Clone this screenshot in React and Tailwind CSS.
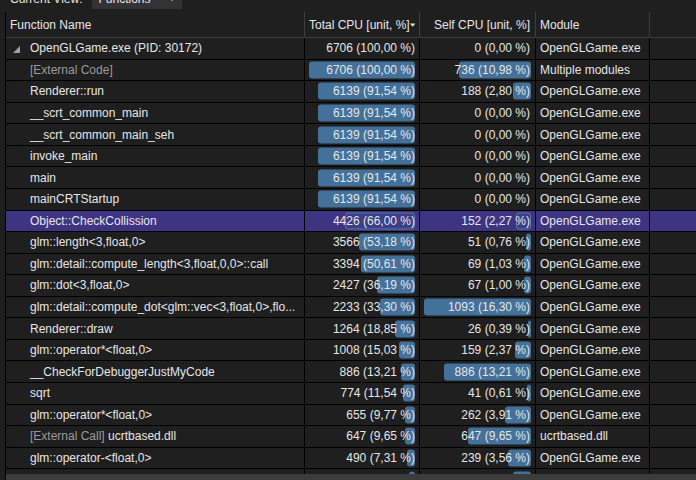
import React from "react";

const rows = [
  { name: "OpenGLGame.exe (PID: 30172)", root: true, total: 6706, totalPct: "100,00", tp: 100, self: 0, selfPct: "0,00", sp: 0, module: "OpenGLGame.exe" },
  { name: "[External Code]", ext: true, total: 6706, totalPct: "100,00", tp: 100, self: 736, selfPct: "10,98", sp: 10.98, module: "Multiple modules" },
  { name: "Renderer::run", total: 6139, totalPct: "91,54", tp: 91.54, self: 188, selfPct: "2,80", sp: 2.8, module: "OpenGLGame.exe" },
  { name: "__scrt_common_main", total: 6139, totalPct: "91,54", tp: 91.54, self: 0, selfPct: "0,00", sp: 0, module: "OpenGLGame.exe" },
  { name: "__scrt_common_main_seh", total: 6139, totalPct: "91,54", tp: 91.54, self: 0, selfPct: "0,00", sp: 0, module: "OpenGLGame.exe" },
  { name: "invoke_main", total: 6139, totalPct: "91,54", tp: 91.54, self: 0, selfPct: "0,00", sp: 0, module: "OpenGLGame.exe" },
  { name: "main", total: 6139, totalPct: "91,54", tp: 91.54, self: 0, selfPct: "0,00", sp: 0, module: "OpenGLGame.exe" },
  { name: "mainCRTStartup", total: 6139, totalPct: "91,54", tp: 91.54, self: 0, selfPct: "0,00", sp: 0, module: "OpenGLGame.exe" },
  { name: "Object::CheckCollission", selected: true, total: 4426, totalPct: "66,00", tp: 66, self: 152, selfPct: "2,27", sp: 2.27, module: "OpenGLGame.exe" },
  { name: "glm::length<3,float,0>", total: 3566, totalPct: "53,18", tp: 53.18, self: 51, selfPct: "0,76", sp: 0.76, module: "OpenGLGame.exe" },
  { name: "glm::detail::compute_length<3,float,0,0>::call", total: 3394, totalPct: "50,61", tp: 50.61, self: 69, selfPct: "1,03", sp: 1.03, module: "OpenGLGame.exe" },
  { name: "glm::dot<3,float,0>", total: 2427, totalPct: "36,19", tp: 36.19, self: 67, selfPct: "1,00", sp: 1, module: "OpenGLGame.exe" },
  { name: "glm::detail::compute_dot<glm::vec<3,float,0>,flo...", total: 2233, totalPct: "33,30", tp: 33.3, self: 1093, selfPct: "16,30", sp: 16.3, module: "OpenGLGame.exe" },
  { name: "Renderer::draw", total: 1264, totalPct: "18,85", tp: 18.85, self: 26, selfPct: "0,39", sp: 0.39, module: "OpenGLGame.exe" },
  { name: "glm::operator*<float,0>", total: 1008, totalPct: "15,03", tp: 15.03, self: 159, selfPct: "2,37", sp: 2.37, module: "OpenGLGame.exe" },
  { name: "__CheckForDebuggerJustMyCode", total: 886, totalPct: "13,21", tp: 13.21, self: 886, selfPct: "13,21", sp: 13.21, module: "OpenGLGame.exe" },
  { name: "sqrt", total: 774, totalPct: "11,54", tp: 11.54, self: 41, selfPct: "0,61", sp: 0.61, module: "OpenGLGame.exe" },
  { name: "glm::operator*<float,0>", total: 655, totalPct: "9,77", tp: 9.77, self: 262, selfPct: "3,91", sp: 3.91, module: "OpenGLGame.exe" },
  { name: "ucrtbased.dll", call: true, total: 647, totalPct: "9,65", tp: 9.65, self: 647, selfPct: "9,65", sp: 9.65, module: "ucrtbased.dll" },
  { name: "glm::operator-<float,0>", total: 490, totalPct: "7,31", tp: 7.31, self: 239, selfPct: "3,56", sp: 3.56, module: "OpenGLGame.exe" },
  { name: "glm::operator+<float,0>", total: 402, totalPct: "6,00", tp: 6, self: 180, selfPct: "2,68", sp: 2.68, module: "OpenGLGame.exe" },
];

function Bar({ width, selected }) {
  if (width <= 0) return null;
  return (
    <div
      className={
        "absolute right-[4px] top-1/2 -translate-y-1/2 h-[17px] rounded-[3px] " +
        (selected ? "border border-[#5d78ad] bg-[#3b3f86]" : "bg-[#44719a]")
      }
      style={{ width: Math.max(width, 3) }}
    />
  );
}

function Row({ r }) {
  const bg = r.selected ? "bg-[#3f3482]" : "bg-[#1f1f1f]";
  const totalW = r.root ? 0 : (r.tp / 100) * 106;
  const selfW = r.root ? 0 : (r.sp / 16.3) * 107;
  return (
    <div className={`grid grid-cols-[299px_115px_116px_114px] h-[21.57px] border-b border-black ${bg}`}>
      <div className="flex items-center border-r border-black pl-[7px] whitespace-nowrap overflow-hidden">
        <span className="w-[17px] shrink-0 flex items-center">
          {r.root && (
            <svg width="7" height="7" viewBox="0 0 7 7" className="mt-[2px]">
              <polygon points="7,0 7,7 0,7" fill="#a0a0a0" />
            </svg>
          )}
        </span>
        {r.ext ? (
          <span className="text-[#9b9b9b]">{r.name}</span>
        ) : r.call ? (
          <span>
            <span className="text-[#9b9b9b]">[External Call]</span> {r.name}
          </span>
        ) : (
          <span>{r.name}</span>
        )}
      </div>
      <div className="relative flex items-center justify-end border-r border-black pr-[4px] whitespace-nowrap">
        <Bar width={totalW} selected={r.selected} />
        <span className="relative">
          {r.total} ({r.totalPct} %)
        </span>
      </div>
      <div className="relative flex items-center justify-end border-r border-black pr-[5px] whitespace-nowrap">
        <Bar width={selfW} selected={r.selected} />
        <span className="relative">
          {r.self} ({r.selfPct} %)
        </span>
      </div>
      <div className="flex items-center border-r border-black pl-[4px] whitespace-nowrap">{r.module}</div>
    </div>
  );
}

export default function App() {
  return (
    <div className="w-[696px] h-[480px] overflow-hidden bg-[#1f1f1f] text-[#e6e6e6] text-[12px] font-['Liberation_Sans',sans-serif] flex flex-col">
      {/* toolbar, cut off at the top */}
      <div className="h-[12px] overflow-hidden shrink-0">
        <div className="-mt-[12px] h-[21px] flex items-center pl-[10px] gap-[8px]">
          <span>Current View:</span>
          <div className="ml-[2px] w-[90px] h-full bg-[#333337] flex items-center justify-between px-[6px]">
            <span>Functions</span>
            <span className="text-[9px]">▼</span>
          </div>
        </div>
      </div>

      <div className="flex-1 flex flex-col border-l border-black ml-[5px] min-h-0">
        {/* header */}
        <div className="h-[26px] shrink-0 border-b border-[#3d3d3d] flex whitespace-nowrap">
          <div className="grid grid-cols-[299px_115px_116px_114px] h-full">
            <div className="flex items-center pl-[4px] border-r border-[#3d3d3d]">Function Name</div>
            <div className="flex items-center justify-between pl-[4px] pr-[4px] border-r border-[#3d3d3d]">
              <span>Total CPU [unit, %]</span>
              <svg width="7" height="5" viewBox="0 0 7 5" className="mt-[1px]">
                <polygon points="0,0 7,0 3.5,4" fill="#e6e6e6" />
              </svg>
            </div>
            <div className="flex items-center justify-end pr-[5px] border-r border-[#3d3d3d]">Self CPU [unit, %]</div>
            <div className="flex items-center pl-[4px] border-r border-[#3d3d3d]">Module</div>
          </div>
        </div>

        {/* rows */}
        <div className="flex-1 overflow-hidden min-h-0">
          {rows.map((r, i) => (
            <Row key={i} r={r} />
          ))}
        </div>

        {/* horizontal scrollbar */}
        <div className="h-[6px] shrink-0 bg-[#3c3c3c]" />
      </div>
    </div>
  );
}
